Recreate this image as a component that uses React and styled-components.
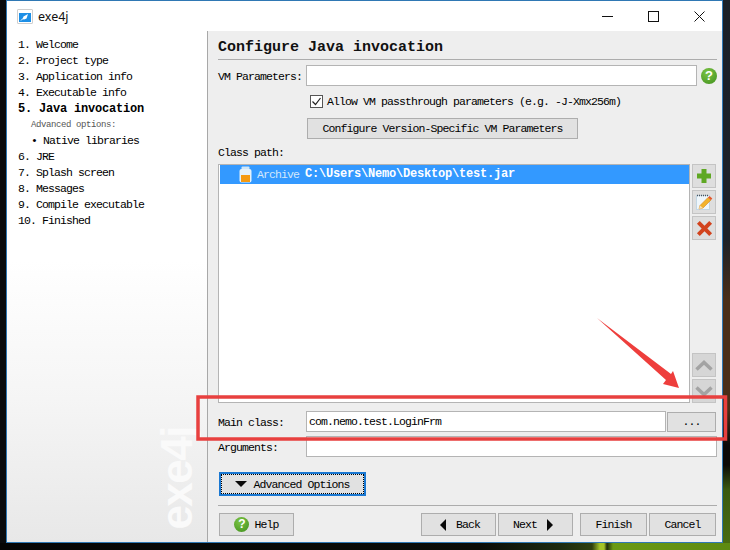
import styled, { createGlobalStyle } from "styled-components";

const GlobalStyle = createGlobalStyle`
  html, body {
    margin: 0;
    padding: 0;
    background: #0c0d0f;
  }
`;

const steps = [
  { label: "1. Welcome" },
  { label: "2. Project type" },
  { label: "3. Application info" },
  { label: "4. Executable info" },
  { label: "5. Java invocation", active: true },
  { label: "Advanced options:", note: true },
  { label: "• Native libraries", sub: true },
  { label: "6. JRE" },
  { label: "7. Splash screen" },
  { label: "8. Messages" },
  { label: "9. Compile executable" },
  { label: "10. Finished" },
];

function TriangleIcon({ dir }) {
  if (dir === "down") {
    return (
      <svg viewBox="0 0 12 6" width="12" height="6">
        <polygon points="0,0 12,0 6,6" fill="#0a0a0a" />
      </svg>
    );
  }
  return (
    <svg viewBox="0 0 6 12" width="6" height="12">
      <polygon points={dir === "left" ? "6,0 6,12 0,6" : "0,0 0,12 6,6"} fill="#0a0a0a" />
    </svg>
  );
}

function JarIcon() {
  return (
    <svg width="13" height="17" viewBox="0 0 13 17">
      <rect x="2.5" y="0.5" width="8" height="3" rx="1" fill="#cfe6f7" />
      <rect x="0.5" y="3" width="12" height="13.5" rx="2" fill="#e4f1fb" />
      <rect x="2" y="9" width="9" height="7" fill="#f59a12" />
    </svg>
  );
}

function EditIcon() {
  return (
    <svg width="18" height="18" viewBox="0 0 18 18">
      <rect x="1.500" y="2.500" width="13" height="14" fill="#eef6fb" stroke="#c3d6e3" />
      <path d="M2 2.500h12" stroke="#4a5560" strokeWidth="1.500" strokeDasharray="1 1" />
      <path d="M5 12.500l8-8 3 2.500-8 8-4 1z" fill="#f2b32c" stroke="#d9841c" strokeWidth="0.600" />
      <path d="M13 4.500l1.500-1.500 2.800 2.400-1.300 1.600z" fill="#e4572e" />
      <path d="M4 16l1-3.500 3 2.500z" fill="#f7e0b0" />
    </svg>
  );
}

export default function App() {
  return (
    <>
      <GlobalStyle />
      <Desktop>
        <Window>
          <TitleBar>
            <AppIcon>
              <svg width="12" height="9" viewBox="0 0 12 9">
                <rect width="12" height="9" fill="#1d8fe6" />
                <path d="M3.500 6l1-2.500 4.500-2.500-1.500 4.500-2.500 1z" fill="#fff" />
                <path d="M2 7.500l2-2" stroke="#fff" />
              </svg>
            </AppIcon>
            <TitleText>exe4j</TitleText>
            <WindowControls>
              <WindowControl>
                <svg width="11" height="11" viewBox="0 0 11 11">
                  <path d="M0 5.500h11" stroke="#111" />
                </svg>
              </WindowControl>
              <WindowControl>
                <svg width="11" height="11" viewBox="0 0 11 11">
                  <rect x="0.500" y="0.500" width="10" height="10" fill="none" stroke="#111" />
                </svg>
              </WindowControl>
              <WindowControl>
                <svg width="11" height="11" viewBox="0 0 11 11">
                  <path d="M0.500 0.500l10 10M10.500 0.500l-10 10" stroke="#111" />
                </svg>
              </WindowControl>
            </WindowControls>
          </TitleBar>

          <Body>
            <Sidebar>
              <StepList>
                {steps.map((step) => (
                  <Step key={step.label} $active={step.active} $note={step.note} $sub={step.sub}>
                    {step.label}
                  </Step>
                ))}
              </StepList>
              <Watermark>exe4j</Watermark>
            </Sidebar>

            <Main>
              <Heading>Configure Java invocation</Heading>

              <FieldRow $top={5}>
                <FieldLabel>VM Parameters:</FieldLabel>
                <TextInput />
                <HelpBadge $size={16} $left={4}>?</HelpBadge>
              </FieldRow>

              <CheckRow>
                <CheckBox>
                  <svg width="11" height="11" viewBox="0 0 11 11">
                    <path d="M1.500 5.500l3 3 5-6.500" fill="none" stroke="#222" strokeWidth="1.200" />
                  </svg>
                </CheckBox>
                <Mono>Allow VM passthrough parameters (e.g. -J-Xmx256m)</Mono>
              </CheckRow>

              <VersionButton>Configure Version-Specific VM Parameters</VersionButton>

              <SectionLabel>Class path:</SectionLabel>

              <ClassPathArea>
                <ClassPathList>
                  <SelectedRow>
                    <JarIcon />
                    <ArchiveTag>Archive</ArchiveTag>
                    <ArchivePath>C:\Users\Nemo\Desktop\test.jar</ArchivePath>
                  </SelectedRow>
                </ClassPathList>
                <SideColumn>
                  <SideGroup>
                    <SideButton>
                      <svg width="14" height="14" viewBox="0 0 14 14">
                        <path d="M4.500 0h5v4.500H14v5H9.500V14h-5V9.500H0v-5h4.500z" fill="#5fa823" />
                      </svg>
                    </SideButton>
                    <SideButton>
                      <EditIcon />
                    </SideButton>
                    <SideButton>
                      <svg width="17" height="17" viewBox="0 0 18 18">
                        <path d="M1 4l3-3 5 5 5-5 3 3-5 5 5 5-3 3-5-5-5 5-3-3 5-5z" fill="#d2431d" />
                      </svg>
                    </SideButton>
                  </SideGroup>
                  <SideGroup>
                    <SideButton $disabled>
                      <svg width="18" height="11" viewBox="0 0 18 11">
                        <path d="M1.500 9.500l7.500-7 7.500 7" fill="none" stroke="#a3a3a3" strokeWidth="3.500" />
                      </svg>
                    </SideButton>
                    <SideButton $disabled>
                      <svg width="18" height="11" viewBox="0 0 18 11">
                        <path d="M1.500 1.500l7.500 7 7.500-7" fill="none" stroke="#a3a3a3" strokeWidth="3.500" />
                      </svg>
                    </SideButton>
                  </SideGroup>
                </SideColumn>
              </ClassPathArea>

              <FieldRow $top={8}>
                <FieldLabel>Main class:</FieldLabel>
                <TextInput defaultValue="com.nemo.test.LoginFrm" />
                <BrowseButton>...</BrowseButton>
              </FieldRow>

              <FieldRow $top={4}>
                <FieldLabel>Arguments:</FieldLabel>
                <TextInput />
              </FieldRow>

              <AdvancedButton>
                <TriangleIcon dir="down" />
                Advanced Options
              </AdvancedButton>

              <Footer>
                <FooterButton $width={75} $gap={5}>
                  <HelpBadge $size={15}>?</HelpBadge>
                  Help
                </FooterButton>
                <NavGroup>
                  <FooterButton $width={75} $gap={10} $nudge={3}>
                    <TriangleIcon dir="left" />
                    Back
                  </FooterButton>
                  <FooterButton $width={75} $gap={10} $nudge={-5}>
                    Next
                    <TriangleIcon dir="right" />
                  </FooterButton>
                  <FooterButton $width={67} $left={5}>Finish</FooterButton>
                  <FooterButton $width={67}>Cancel</FooterButton>
                </NavGroup>
              </Footer>
            </Main>
          </Body>
        </Window>

        <Annotation viewBox="0 0 730 550" width="730" height="550">
          <rect x="198" y="397" width="527.500" height="42" fill="none" stroke="#e8403f" strokeWidth="3.500" />
          <polygon points="597,318 671,374 673,371 679,388 663,384 666,380" fill="#ee3e3c" />
        </Annotation>
      </Desktop>
    </>
  );
}

const Desktop = styled.div`
  position: relative;
  width: 730px;
  height: 550px;
  overflow: hidden;
  box-sizing: border-box;
  padding-left: 6px;
  background:
    linear-gradient(
        90deg,
        #050505 0,
        #0a0c08 480px,
        #1c2a10 560px,
        #2e3f0f 592px,
        #a3c428 600px,
        #a3c428 604px,
        #202c0c 607px,
        #6a9a14 613px,
        #5d8a12 730px
      )
      left bottom / 730px 7px no-repeat,
    linear-gradient(
        180deg,
        #1a2028 0,
        #1d2128 240px,
        #4a2e18 300px,
        #4a2e18 410px,
        #0c0a08 445px,
        #0c0a08 465px,
        #3a5a10 490px,
        #4a6e12 550px
      )
      right top / 7px 550px no-repeat,
    #0a0b0d;
`;

const Window = styled.div`
  width: 717px;
  height: 543px;
  box-sizing: border-box;
  border: 1px solid #2f78b4;
  display: flex;
  flex-direction: column;
  background: #eeeeee;
`;

const TitleBar = styled.div`
  height: 30px;
  flex: none;
  display: flex;
  align-items: center;
  background: #fff;
  padding-left: 10px;
`;

const AppIcon = styled.div`
  padding: 3px 1px 0;
  height: 10px;
  border: 1px solid #cfcfcf;
  border-radius: 1px;
  display: flex;
  margin-right: 5px;
`;

const TitleText = styled.span`
  font-family: "Noto Sans", "Liberation Sans", sans-serif;
  font-size: 12.500px;
  color: #111;
`;

const WindowControls = styled.div`
  margin-left: auto;
  display: flex;
`;

const WindowControl = styled.div`
  width: 46px;
  height: 30px;
  display: flex;
  align-items: center;
  justify-content: center;
`;

const Body = styled.div`
  flex: 1;
  min-height: 0;
  display: flex;
`;

const Sidebar = styled.aside`
  position: relative;
  width: 201px;
  flex: none;
  box-sizing: border-box;
  border-right: 1px solid #a8a8a8;
  background: linear-gradient(180deg, #fff 0%, #fff 45%, #f5f5f5 72%, #e8e8e8 100%);
  overflow: hidden;
`;

const StepList = styled.ul`
  list-style: none;
  margin: 0;
  padding: 6px 0 0 11px;
`;

const Step = styled.li`
  height: 16px;
  line-height: 16px;
  white-space: pre;
  color: ${({ $note }) => ($note ? "#555" : "#000")};
  font-family: "Liberation Mono", monospace;
  font-size: ${({ $active, $note }) => ($active ? "12px" : $note ? "9px" : "11.500px")};
  font-weight: ${({ $active }) => ($active ? 700 : 400)};
  letter-spacing: ${({ $active, $note }) => ($active ? "-0.200px" : $note ? "-0.400px" : "-0.900px")};
  padding-left: ${({ $note, $sub }) => ($note ? "13px" : $sub ? "13px" : "0")};
`;

const Watermark = styled.div`
  position: absolute;
  left: 148px;
  bottom: 12px;
  writing-mode: vertical-rl;
  transform: rotate(180deg);
  font-family: "Liberation Sans", sans-serif;
  font-size: 44px;
  font-weight: 700;
  letter-spacing: -1.500px;
  line-height: 1;
  color: #fafafa;
`;

const Main = styled.main`
  flex: 1;
  min-width: 0;
  box-sizing: border-box;
  padding: 0 5px 0 10px;
  display: flex;
  flex-direction: column;
`;

const Heading = styled.h1`
  margin: 0;
  height: 29px;
  flex: none;
  box-sizing: border-box;
  border-bottom: 1px solid #acacac;
  padding-top: 8px;
  font-family: "Liberation Mono", monospace;
  font-size: 15px;
  line-height: 18px;
  font-weight: 700;
  color: #111;
`;

const Mono = styled.span`
  font-family: "Liberation Mono", monospace;
  font-size: 11.500px;
  letter-spacing: -0.900px;
  color: #000;
  white-space: pre;
`;

const FieldRow = styled.div`
  margin-top: ${({ $top }) => $top}px;
  height: 21px;
  flex: none;
  display: flex;
  align-items: center;
`;

const FieldLabel = styled(Mono)`
  width: 88px;
  flex: none;
  padding-top: 2px;
`;

const TextInput = styled.input`
  flex: 1;
  min-width: 0;
  height: 21px;
  box-sizing: border-box;
  border: 1px solid #b4b4b4;
  background: #fff;
  padding: 0 2px;
  outline: none;
  font-family: "Liberation Mono", monospace;
  font-size: 11.500px;
  letter-spacing: -0.900px;
  color: #000;
`;

const HelpBadge = styled.span`
  width: ${({ $size }) => $size}px;
  height: ${({ $size }) => $size}px;
  margin-left: ${({ $left }) => $left || 0}px;
  flex: none;
  border-radius: 50%;
  background: radial-gradient(circle at 40% 30%, #7cc444, #3f8f1d);
  color: #fff;
  font-family: "Liberation Sans", sans-serif;
  font-size: ${({ $size }) => $size - 3}px;
  font-weight: 700;
  letter-spacing: 0;
  line-height: ${({ $size }) => $size}px;
  text-align: center;
`;

const CheckRow = styled.label`
  margin: 9px 0 0 92px;
  height: 13px;
  flex: none;
  display: flex;
  align-items: center;
  gap: 4px;
`;

const CheckBox = styled.span`
  width: 11px;
  height: 11px;
  border: 1px solid #555;
  background: #fff;
  display: flex;
`;

const Button = styled.button`
  box-sizing: border-box;
  flex: none;
  padding: 0;
  border: 1px solid #adadad;
  background: #e1e1e1;
  display: flex;
  align-items: center;
  justify-content: center;
  font-family: "Liberation Mono", monospace;
  font-size: 11.500px;
  letter-spacing: -0.900px;
  color: #000;
  white-space: pre;
`;

const VersionButton = styled(Button)`
  margin: 10px 0 0 89px;
  width: 271px;
  height: 21px;
`;

const SectionLabel = styled(Mono)`
  margin-top: 7px;
  height: 18px;
  line-height: 14px;
  flex: none;
`;

const ClassPathArea = styled.div`
  height: 239px;
  flex: none;
  display: flex;
  gap: 2px;
  padding-right: 1px;
`;

const ClassPathList = styled.div`
  flex: 1;
  box-sizing: border-box;
  border: 1px solid #b4b4b4;
  background: #fff;
  padding: 0 0 0 1px;
`;

const SelectedRow = styled.div`
  height: 19px;
  display: flex;
  align-items: center;
  padding-left: 19px;
  background: #3399ff;
  font-family: "Liberation Mono", monospace;
  line-height: 19px;
  white-space: pre;
`;

const ArchiveTag = styled.span`
  margin-left: 5px;
  font-size: 11.500px;
  letter-spacing: -0.900px;
  color: #d4e8fb;
`;

const ArchivePath = styled.span`
  margin-left: 6px;
  font-size: 12px;
  font-weight: 700;
  letter-spacing: -0.200px;
  color: #fff;
`;

const SideColumn = styled.div`
  width: 24px;
  flex: none;
  display: flex;
  flex-direction: column;
  justify-content: space-between;
`;

const SideGroup = styled.div`
  display: flex;
  flex-direction: column;
  gap: 2px;
`;

const SideButton = styled(Button)`
  width: 24px;
  height: 24px;
  border-color: #c4c4c4;
  background: ${({ $disabled }) => ($disabled ? "#d6d6d6" : "#dedede")};
`;

const BrowseButton = styled(Button)`
  margin: 0 1px 0 1px;
  width: 49px;
  height: 20px;
`;

const AdvancedButton = styled(Button)`
  margin: 15px 0 0 1px;
  width: 147px;
  height: 24px;
  gap: 6px;
  border: 2px solid #1a78d2;
  outline: 1px dotted #000;
  outline-offset: -3px;
`;

const Footer = styled.footer`
  margin-top: 9px;
  padding: 7px 1px 0;
  border-top: 1px solid #acacac;
  display: flex;
  justify-content: space-between;
`;

const NavGroup = styled.div`
  display: flex;
  gap: 2px;
`;

const FooterButton = styled(Button)`
  width: ${({ $width }) => $width}px;
  height: 23px;
  margin-left: ${({ $left }) => $left || 0}px;
  gap: ${({ $gap }) => $gap || 0}px;
  padding-left: ${({ $nudge }) => ($nudge > 0 ? $nudge : 0)}px;
  padding-right: ${({ $nudge }) => ($nudge < 0 ? -$nudge : 0)}px;
`;

const Annotation = styled.svg`
  position: absolute;
  left: 0;
  top: 0;
  pointer-events: none;
`;
